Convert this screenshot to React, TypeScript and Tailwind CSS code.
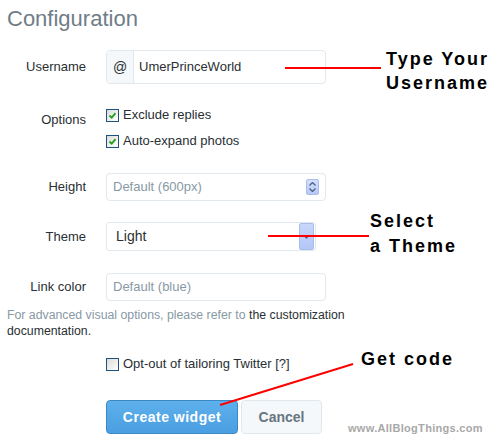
import React from "react";

function Check({ checked }: { checked?: boolean }) {
	return (
		<span className="flex h-[13px] w-[13px] shrink-0 items-center justify-center border border-[#1c5180] bg-gradient-to-br from-[#dcdcd7] to-white">
			{checked && (
				<svg width="9" height="9" viewBox="0 0 9 9">
					<path d="M1.5 4.5 L3.7 6.7 L7.5 2.2" fill="none" stroke="#21a121" strokeWidth="1.8" />
				</svg>
			)}
		</span>
	);
}

function Row({ label, children, className = "" }: { label: string; children: React.ReactNode; className?: string }) {
	return (
		<div className={`flex items-center ${className}`}>
			<div className="w-[86px] text-right text-[13px] text-[#292f33]">{label}</div>
			<div className="ml-[20px]">{children}</div>
		</div>
	);
}

export default function App() {
	return (
		<div className="relative h-[441px] w-[498px] overflow-hidden bg-white font-['Liberation_Sans',Arial,sans-serif] text-[13px] text-[#292f33]">
			<h1 className="pl-[7px] pt-[5px] text-[22px] leading-[28px] text-[#6f7d87]">Configuration</h1>

			{/* username */}
			<Row label="Username" className="mt-[17px]">
				<div className="flex h-[34px] w-[220px] overflow-hidden rounded-[4px] border border-[#e1e8ed]">
					<span className="flex w-[27px] items-center justify-center border-r border-[#e1e8ed] bg-[#f5f8fa] text-[14px]">@</span>
					<span className="flex items-center pl-[5px]">UmerPrinceWorld</span>
				</div>
			</Row>

			{/* options */}
			<div className="mt-[18px] flex items-start">
				<div className="mt-[10px] w-[86px] text-right leading-4">Options</div>
				<div className="ml-[20px]">
					<label className="flex h-[26px] items-center gap-[4px]">
						<Check checked />
						<span>Exclude replies</span>
					</label>
					<label className="flex h-[26px] items-center gap-[4px]">
						<Check checked />
						<span>Auto-expand photos</span>
					</label>
				</div>
			</div>

			{/* height */}
			<Row label="Height" className="mt-[19px]">
				<div className="flex h-[28px] w-[220px] items-center justify-between rounded-[4px] border border-[#e1e8ed] pl-[6px] pr-[6px]">
					<span className="text-[#8899a6]">Default (600px)</span>
					<span className="flex h-[16px] w-[13px] flex-col items-center justify-center gap-[2px] rounded-[2px] border border-[#a9bcec] bg-gradient-to-b from-[#d4e0fc] to-[#b5c8f6]">
						<svg width="7" height="4" viewBox="0 0 7 4">
							<path d="M0.5 3.5 L3.5 0.5 L6.5 3.5" fill="none" stroke="#4d6185" strokeWidth="1.3" />
						</svg>
						<svg width="7" height="4" viewBox="0 0 7 4">
							<path d="M0.5 0.5 L3.5 3.5 L6.5 0.5" fill="none" stroke="#4d6185" strokeWidth="1.3" />
						</svg>
					</span>
				</div>
			</Row>

			{/* theme */}
			<Row label="Theme" className="mt-[21px]">
				<div className="flex h-[29px] w-[210px] items-stretch justify-between rounded-[3px] border border-[#e1e8ed] pl-[9px] pr-[1px]">
					<span className="flex items-center text-[14px] text-[#292f33]">Light</span>
					<span className="flex w-[15px] items-center justify-center rounded-[2px] border border-[#a9bcec] bg-gradient-to-b from-[#c9d7fb] to-[#b3c6f6]">
						<svg width="7" height="4" viewBox="0 0 7 4">
							<path d="M0 0 L7 0 L3.5 4 Z" fill="#4d6185" />
						</svg>
					</span>
				</div>
			</Row>

			{/* link color */}
			<Row label="Link color" className="mt-[22px]">
				<div className="flex h-[28px] w-[220px] items-center rounded-[4px] border border-[#e1e8ed] pl-[6px]">
					<span className="text-[#8899a6]">Default (blue)</span>
				</div>
			</Row>

			<div className="mt-[6px] pl-[7px] text-[12.3px] leading-4">
				<div>
					<span className="text-[#8899a6]">For advanced visual options, please refer to </span>
					<span>the customization</span>
				</div>
				<div>documentation.</div>
			</div>

			<label className="ml-[106px] mt-[15px] flex h-[20px] items-center gap-[4px]">
				<Check />
				<span>Opt-out of tailoring Twitter [?]</span>
			</label>

			<div className="ml-[106px] mt-[26px] flex gap-[3px]">
				<button className="h-[34px] w-[132px] rounded-[4px] border border-[#3b88c3] bg-gradient-to-b from-[#5eb0ec] to-[#4a9fe1] text-[14px] font-bold tracking-[0.5px] text-white">
					Create widget
				</button>
				<button className="h-[34px] w-[81px] rounded-[4px] border border-[#e1e8ed] bg-[#f5f8fa] text-[14px] font-bold text-[#66757f]">
					Cancel
				</button>
			</div>

			{/* annotations */}
			<svg className="pointer-events-none absolute left-0 top-0" width="498" height="441">
				<line x1="285" y1="68" x2="381" y2="68" stroke="#ff0000" strokeWidth="2" />
				<line x1="268" y1="236" x2="369" y2="236" stroke="#ff0000" strokeWidth="2" />
				<line x1="353" y1="364" x2="220" y2="405" stroke="#ff0000" strokeWidth="2" />
			</svg>
			<div className="absolute left-[386px] top-[47px] text-[18px] font-bold leading-[24px] tracking-[2px] text-black">
				Type Your
				<br />
				Username
			</div>
			<div className="absolute left-[370px] top-[209px] text-[18px] font-bold leading-[25px] tracking-[2px] text-black">
				Select
				<br />a Theme
			</div>
			<div className="absolute left-[361px] top-[347px] text-[18px] font-bold leading-[24px] tracking-[2px] text-black">
				Get code
			</div>
			<div className="absolute left-[348px] top-[421px] text-[11px] font-bold leading-[14px] tracking-[0.3px] text-[#a8a8a8]">
				www.AllBlogThings.com
			</div>
		</div>
	);
}
